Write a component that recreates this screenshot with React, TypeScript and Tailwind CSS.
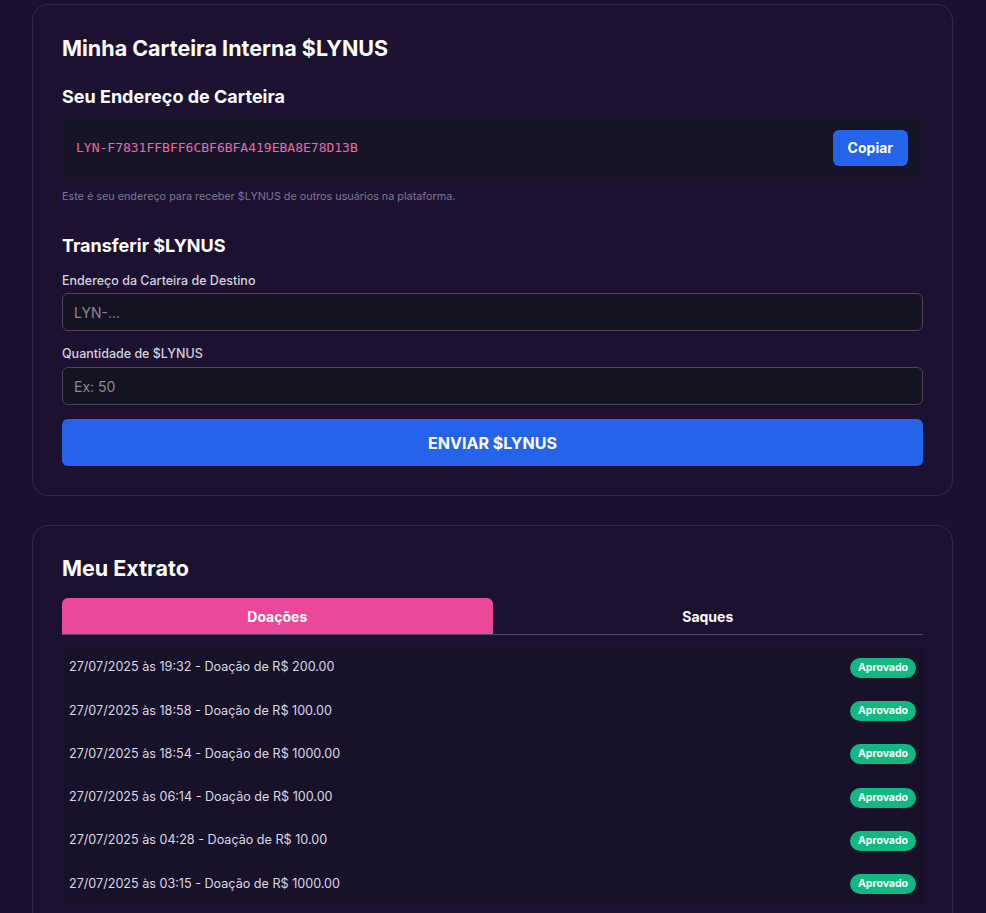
import { useState } from 'react';

type Tx = { date: string; time: string; amount: string; status: string };

const donations: Tx[] = [
  { date: '27/07/2025', time: '19:32', amount: '200.00', status: 'Aprovado' },
  { date: '27/07/2025', time: '18:58', amount: '100.00', status: 'Aprovado' },
  { date: '27/07/2025', time: '18:54', amount: '1000.00', status: 'Aprovado' },
  { date: '27/07/2025', time: '06:14', amount: '100.00', status: 'Aprovado' },
  { date: '27/07/2025', time: '04:28', amount: '10.00', status: 'Aprovado' },
  { date: '27/07/2025', time: '03:15', amount: '1000.00', status: 'Aprovado' },
];

function WalletCard() {
  return (
    <section className="rounded-2xl border border-[#33284a] bg-[#1c1130] px-[29px] pt-[27px] pb-[29px]">
      <h2 className="text-[21.5px] font-bold leading-8 text-white">Minha Carteira Interna $LYNUS</h2>

      <h3 className="mt-[21px] text-[18px] font-bold leading-6 text-white">Seu Endereço de Carteira</h3>
      <div className="mt-[7px] flex h-[63px] items-center justify-between rounded-md bg-[#171427] pl-[14px] pr-[15px]">
        <span className="font-['DejaVu_Sans_Mono',monospace] text-[13px] text-[#e26bab]">
          LYN-F7831FFBFF6CBF6BFA419EBA8E78D13B
        </span>
        <button type="button" className="h-9 rounded-md bg-[#2563eb] px-[15px] text-[14px] font-bold text-white">
          Copiar
        </button>
      </div>
      <p className="mt-[10px] text-[10.8px] leading-4 text-[#7d7890]">
        Este é seu endereço para receber $LYNUS de outros usuários na plataforma.
      </p>

      <h3 className="mt-[29px] text-[18px] font-bold leading-6 text-white">Transferir $LYNUS</h3>

      <label className="mt-[13px] block text-[12.5px] font-medium leading-5 text-[#d4d1dc]">
        Endereço da Carteira de Destino
      </label>
      <input
        placeholder="LYN-..."
        className="mt-[2px] block h-[38px] w-full rounded-md border border-[#4a4458] bg-[#151222] px-[11px] text-[14px] text-white placeholder:text-[#8a8699] outline-none"
      />

      <label className="mt-[13px] block text-[12.5px] font-medium leading-5 text-[#d4d1dc]">Quantidade de $LYNUS</label>
      <input
        placeholder="Ex: 50"
        className="mt-[3px] block h-[38px] w-full rounded-md border border-[#4a4458] bg-[#151222] px-[11px] text-[14px] text-white placeholder:text-[#8a8699] outline-none"
      />

      <button
        type="button"
        className="mt-[14px] h-[47px] w-full rounded-md bg-[#2563eb] text-[16px] font-bold text-white"
      >
        ENVIAR $LYNUS
      </button>
    </section>
  );
}

function StatementCard() {
  const [tab, setTab] = useState<'doacoes' | 'saques'>('doacoes');

  return (
    <section className="rounded-2xl border border-[#33284a] bg-[#1c1130] px-[29px] pt-[26px] pb-[29px]">
      <h2 className="text-[21.5px] font-bold leading-8 text-white">Meu Extrato</h2>

      <div className="mt-[14px] flex border-b border-[#544c66]">
        <button
          type="button"
          onClick={() => setTab('doacoes')}
          className={
            tab === 'doacoes'
              ? 'h-9 flex-1 rounded-t-md bg-[#ec4899] text-[14px] font-bold text-white'
              : 'h-9 flex-1 text-[14px] font-bold text-white'
          }
        >
          Doações
        </button>
        <button
          type="button"
          onClick={() => setTab('saques')}
          className={
            tab === 'saques'
              ? 'h-9 flex-1 rounded-t-md bg-[#ec4899] text-[14px] font-bold text-white'
              : 'h-9 flex-1 text-[14px] font-bold text-white'
          }
        >
          Saques
        </button>
      </div>

      <ul className="mt-[11px] bg-[#17112a]">
        {tab === 'doacoes' &&
          donations.map((tx, i) => (
            <li key={i} className="flex h-[43.3px] items-center justify-between pl-[7px] pr-[7px]">
              <span className="text-[12.6px] text-[#dcd9e3]">
                {tx.date} às {tx.time} - Doação de R$ {tx.amount}
              </span>
              <span className="rounded-full bg-[#10b981] px-[8px] py-[3px] text-[10.5px] font-bold leading-[14px] text-white">
                {tx.status}
              </span>
            </li>
          ))}
      </ul>
    </section>
  );
}

export default function App() {
  return (
    <div className="min-h-screen bg-[#1b1030] font-['Inter',sans-serif]">
      <div className="ml-[32px] flex w-[921px] flex-col gap-[29px] pt-[4px] pb-10">
        <WalletCard />
        <StatementCard />
      </div>
    </div>
  );
}
